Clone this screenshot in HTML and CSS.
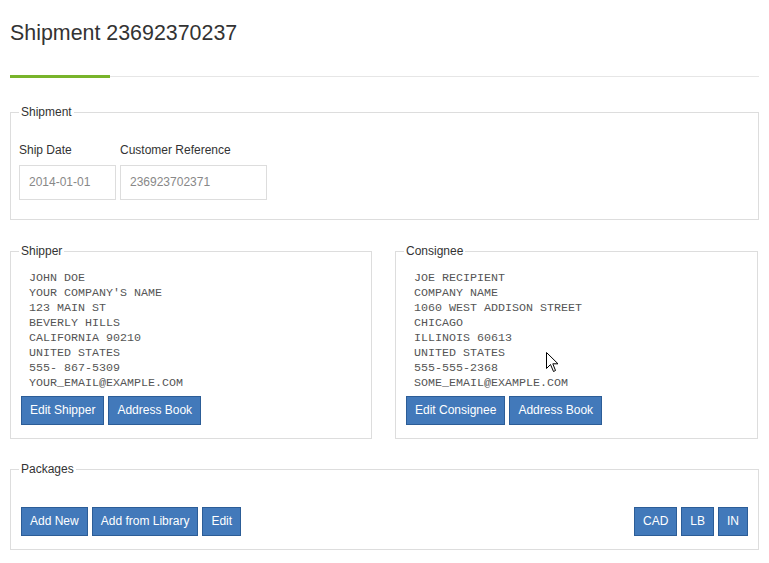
FILE: index.html
```html
<!DOCTYPE html>
<html>
<head>
<meta charset="utf-8">
<title>Shipment 23692370237</title>
<link rel="stylesheet" href="styles.css">
</head>
<body>
<div class="page">
  <h1 class="title">Shipment 23692370237</h1>
  <div class="rule"><span class="rule-accent"></span><span class="rule-line"></span></div>

  <fieldset class="box box-shipment">
    <legend>Shipment</legend>
    <div class="fields">
      <div class="field">
        <label class="label">Ship Date</label>
        <div class="input input-date">2014-01-01</div>
      </div>
      <div class="field">
        <label class="label">Customer Reference</label>
        <div class="input input-ref">236923702371</div>
      </div>
    </div>
  </fieldset>

  <div class="parties">
    <fieldset class="box box-party">
      <legend>Shipper</legend>
      <pre class="address">JOHN DOE
YOUR COMPANY'S NAME
123 MAIN ST
BEVERLY HILLS
CALIFORNIA 90210
UNITED STATES
555- 867-5309
YOUR_EMAIL@EXAMPLE.COM</pre>
      <div class="btn-row">
        <button class="btn">Edit Shipper</button>
        <button class="btn">Address Book</button>
      </div>
    </fieldset>
    <fieldset class="box box-party">
      <legend>Consignee</legend>
      <pre class="address">JOE RECIPIENT
COMPANY NAME
1060 WEST ADDISON STREET
CHICAGO
ILLINOIS 60613
UNITED STATES
555-555-2368
SOME_EMAIL@EXAMPLE.COM</pre>
      <div class="btn-row">
        <button class="btn">Edit Consignee</button>
        <button class="btn">Address Book</button>
      </div>
    </fieldset>
  </div>

  <fieldset class="box box-packages">
    <legend>Packages</legend>
    <div class="btn-row btn-row-split">
      <div class="btn-group">
        <button class="btn">Add New</button>
        <button class="btn">Add from Library</button>
        <button class="btn">Edit</button>
      </div>
      <div class="btn-group">
        <button class="btn">CAD</button>
        <button class="btn">LB</button>
        <button class="btn">IN</button>
      </div>
    </div>
  </fieldset>
</div>
<svg class="cursor" width="13" height="21" viewBox="0 0 13 21"><path d="M0.5 0.5 L0.5 16.5 L4.5 12.5 L7.5 19.5 L9.5 18.5 L6.8 11.8 L12 11.8 Z" fill="#fff" stroke="#000" stroke-width="1" stroke-linejoin="miter"/></svg>
</body>
</html>
```

FILE: styles.css
```css
html, body {
  margin: 0;
  padding: 0;
  background: #fff;
}
body {
  font-family: "Liberation Sans", Arial, sans-serif;
  font-size: 12px;
  color: #333;
}
.page {
  padding: 0 10px 0 10px;
  width: 749px;
}
.title {
  margin: 22px 0 0 0;
  font-size: 21.4px;
  font-weight: normal;
  line-height: 22px;
  color: #333;
}
.rule {
  display: flex;
  align-items: center;
  margin-top: 31px;
  height: 3px;
}
.rule-accent {
  width: 100px;
  height: 3px;
  background: #78b42a;
}
.rule-line {
  flex: 1;
  height: 1px;
  background: #e6e6e6;
}
.box {
  margin: 0;
  border: 1px solid #ddd;
  padding: 0 8px;
  min-width: 0;
}
.box legend {
  padding: 0 2px;
  font-size: 12px;
  line-height: 14px;
  color: #333;
}
.box-shipment {
  margin-top: 27px;
  padding-top: 24px;
  padding-bottom: 19px;
}
.fields {
  display: flex;
  gap: 4px;
}
.field {
  display: flex;
  flex-direction: column;
}
.label {
  line-height: 14px;
  margin-bottom: 8px;
}
.input {
  height: 33px;
  line-height: 33px;
  border: 1px solid #ddd;
  padding: 0 10px 0 9px;
  color: #888;
  box-sizing: content-box;
}
.input-date { width: 76px; }
.input-ref { width: 126px; }

.parties {
  display: grid;
  grid-template-columns: 362px 363px;
  column-gap: 23px;
  margin-top: 24px;
}
.box-party {
  padding-top: 13px;
  padding-bottom: 13px;
}
.address {
  margin: 0;
  padding-left: 10px;
  font-family: "Liberation Mono", "Courier New", monospace;
  font-size: 11.67px;
  line-height: 15px;
  color: #555;
}
.btn-row {
  display: flex;
  gap: 4px;
  margin: 5px 2px 0 2px;
}
.btn-row-split {
  justify-content: space-between;
  margin-top: 0;
}
.btn-group {
  display: flex;
  gap: 4px;
}
.btn {
  height: 29px;
  padding: 0 8px;
  border: 1px solid #2c5d97;
  background: #4279ba;
  color: #fff;
  font-family: "Liberation Sans", Arial, sans-serif;
  font-size: 12px;
  line-height: 27px;
  border-radius: 0;
  cursor: pointer;
}
.btn-wide {
  padding: 0 9px;
}
.box-packages {
  margin-top: 23px;
  padding-top: 31px;
  padding-bottom: 13px;
}
.cursor {
  position: absolute;
  left: 546px;
  top: 352px;
}
```
